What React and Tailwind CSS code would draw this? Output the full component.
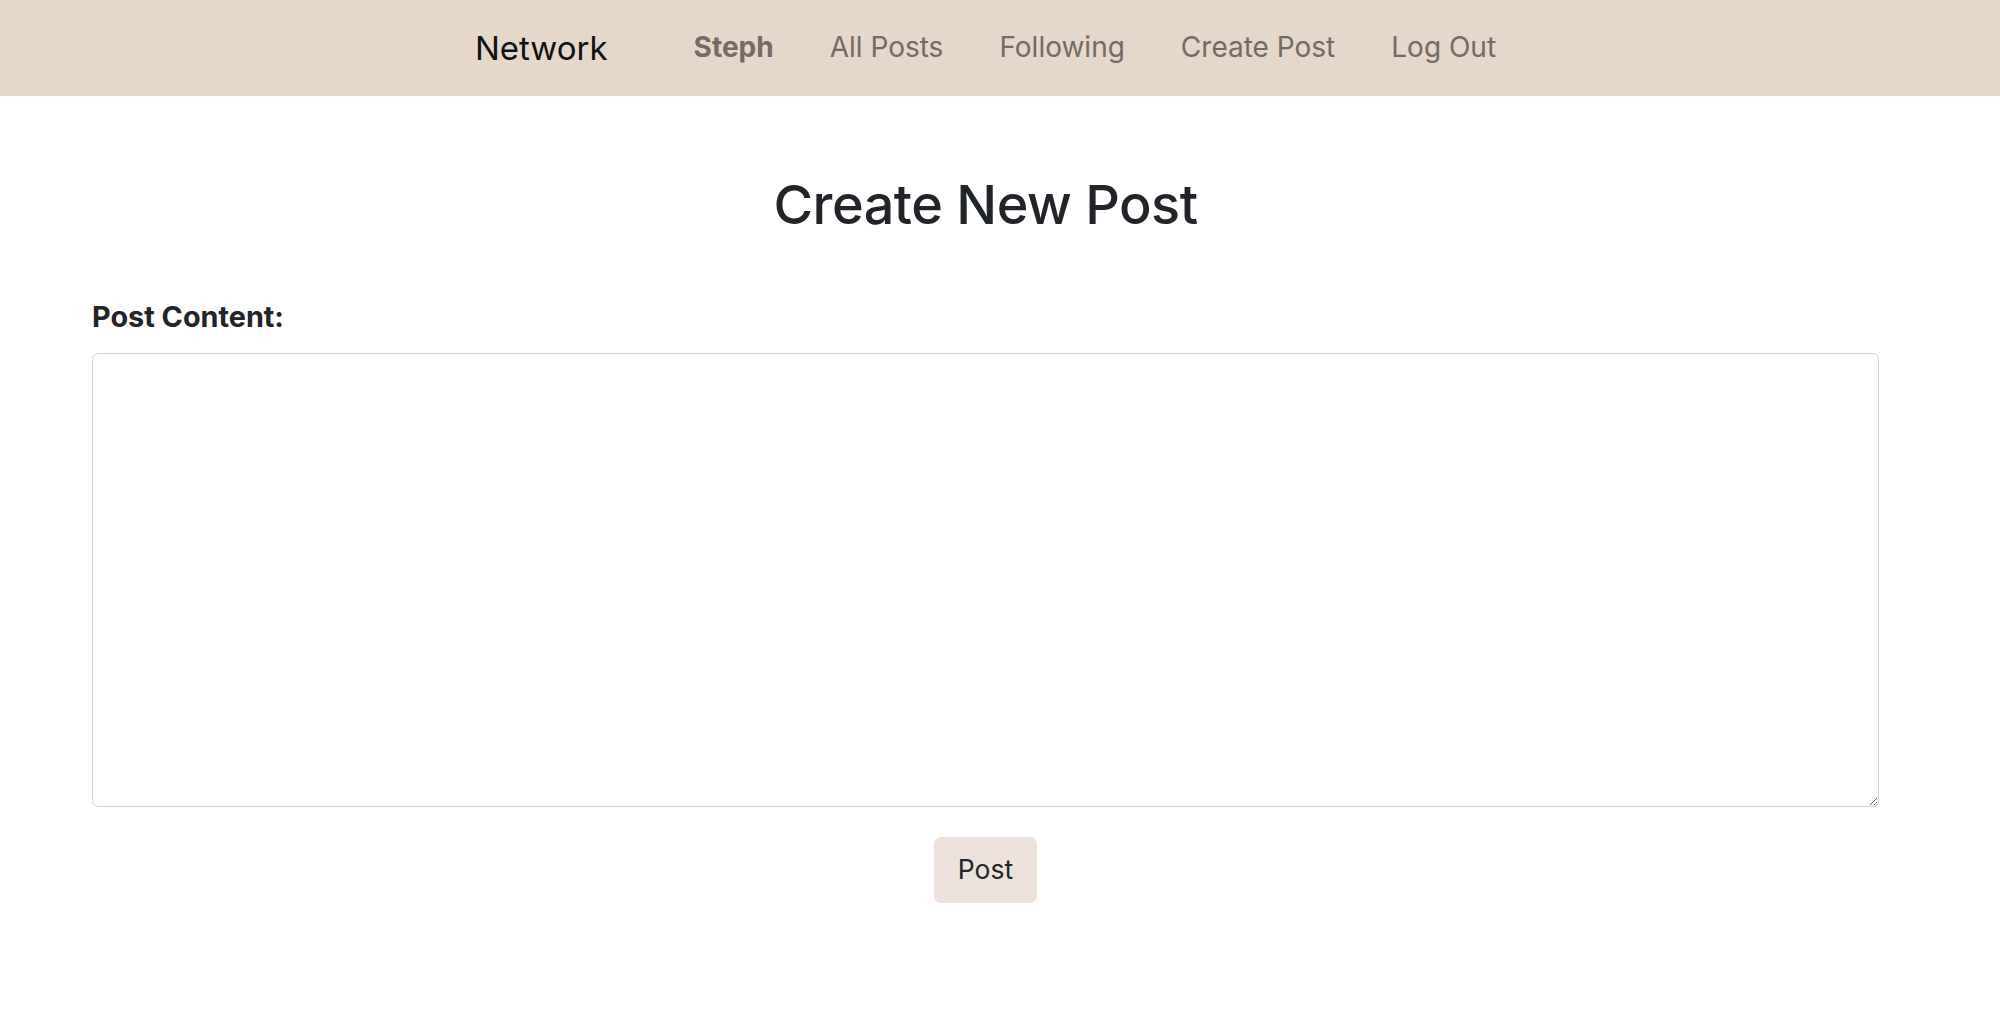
const LINKS = ["All Posts", "Following", "Create Post", "Log Out"];

function Navbar() {
  return (
    <nav className="w-full h-[96px] bg-[#e5d7ca]">
      <div className="w-[1971px] h-full flex items-center justify-center">
        <a href="#" className="text-[33px] text-[#111111] leading-none mr-[86px]">
          Network
        </a>
        <ul className="flex items-center gap-[56px]">
          <li>
            <a href="#" className="text-[28px] font-bold text-[#736c65] leading-none">
              Steph
            </a>
          </li>
          {LINKS.map((label) => (
            <li key={label}>
              <a href="#" className="text-[28px] text-[#736c65] leading-none">
                {label}
              </a>
            </li>
          ))}
        </ul>
      </div>
    </nav>
  );
}

export default function App() {
  return (
    <div className="min-h-screen bg-white font-['Inter',sans-serif] text-[#212529]">
      <Navbar />
      <main className="w-[1971px] px-[92px] pt-[76px]">
        <h1 className="text-center text-[54px] font-medium leading-[66px] tracking-[-0.5px]">
          Create New Post
        </h1>
        <form className="mt-[58px] flex flex-col" onSubmit={(e) => e.preventDefault()}>
          <label htmlFor="content" className="text-[28.8px] font-bold leading-[42px]">
            Post Content:
          </label>
          <textarea
            id="content"
            className="mt-[15px] w-full h-[454px] rounded-[6px] border border-[#cfd3d8] bg-white p-3 text-[26px] focus:outline-none"
          />
          <div className="mt-[30px] flex justify-center">
            <button
              type="submit"
              className="h-[66px] px-[24px] rounded-[7px] bg-[#ede3dc] text-[26.5px] text-[#212529]"
            >
              Post
            </button>
          </div>
        </form>
      </main>
    </div>
  );
}
